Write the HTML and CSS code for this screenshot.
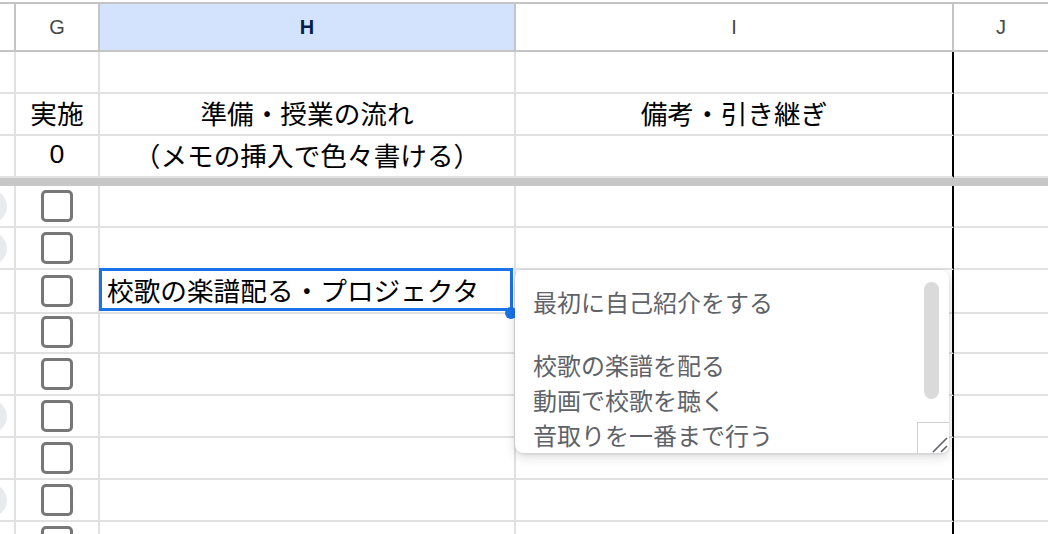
FILE: index.html
```html
<!DOCTYPE html>
<html lang="ja">
<head>
<meta charset="utf-8">
<title>授業計画シート</title>
<link rel="stylesheet" href="styles.css">
</head>
<body>
<div class="sheet">
  <div class="row head">
    <div class="cell stub"></div>
    <div class="cell">G</div>
    <div class="cell picked">H</div>
    <div class="cell">I</div>
    <div class="cell last">J</div>
  </div>

  <div class="row">
    <div class="cell stub"></div>
    <div class="cell"></div>
    <div class="cell"></div>
    <div class="cell edge"></div>
    <div class="cell last"></div>
  </div>
  <div class="row">
    <div class="cell stub"></div>
    <div class="cell center txt">実施</div>
    <div class="cell center txt">準備・授業の流れ</div>
    <div class="cell center txt edge">備考・引き継ぎ</div>
    <div class="cell last"></div>
  </div>
  <div class="row">
    <div class="cell stub"></div>
    <div class="cell center txt">0</div>
    <div class="cell center txt">（メモの挿入で色々書ける）</div>
    <div class="cell edge"></div>
    <div class="cell last"></div>
  </div>

  <div class="freeze"></div>

  <div class="row">
    <div class="cell stub"><span class="rownum"></span></div>
    <div class="cell center"><span class="check"></span></div>
    <div class="cell"></div>
    <div class="cell edge"></div>
    <div class="cell last"></div>
  </div>
  <div class="row">
    <div class="cell stub"><span class="rownum"></span></div>
    <div class="cell center"><span class="check"></span></div>
    <div class="cell"></div>
    <div class="cell edge"></div>
    <div class="cell last"></div>
  </div>
  <div class="row">
    <div class="cell stub"></div>
    <div class="cell center"><span class="check"></span></div>
    <div class="cell txt active">校歌の楽譜配る・プロジェクタ<span class="handle"></span></div>
    <div class="cell edge"></div>
    <div class="cell last"></div>
  </div>
  <div class="row">
    <div class="cell stub"></div>
    <div class="cell center"><span class="check"></span></div>
    <div class="cell"></div>
    <div class="cell edge"></div>
    <div class="cell last"></div>
  </div>
  <div class="row">
    <div class="cell stub"></div>
    <div class="cell center"><span class="check"></span></div>
    <div class="cell"></div>
    <div class="cell edge"></div>
    <div class="cell last"></div>
  </div>
  <div class="row">
    <div class="cell stub"><span class="rownum"></span></div>
    <div class="cell center"><span class="check"></span></div>
    <div class="cell"></div>
    <div class="cell edge"></div>
    <div class="cell last"></div>
  </div>
  <div class="row">
    <div class="cell stub"></div>
    <div class="cell center"><span class="check"></span></div>
    <div class="cell"></div>
    <div class="cell edge"></div>
    <div class="cell last"></div>
  </div>
  <div class="row">
    <div class="cell stub"><span class="rownum"></span></div>
    <div class="cell center"><span class="check"></span></div>
    <div class="cell"></div>
    <div class="cell edge"></div>
    <div class="cell last"></div>
  </div>
  <div class="row">
    <div class="cell stub"></div>
    <div class="cell center"><span class="check"></span></div>
    <div class="cell"></div>
    <div class="cell edge"></div>
    <div class="cell last"></div>
  </div>

  <div class="note">
    <div class="note-text">
      <p class="note-lead">最初に自己紹介をする</p>
      <p>校歌の楽譜を配る<br>動画で校歌を聴く<br>音取りを一番まで行う</p>
    </div>
    <div class="note-thumb"></div>
    <div class="note-grip">
      <svg width="31" height="30" viewBox="0 0 31 30">
        <path d="M15 29 L29 15 M23 29 L29 23" stroke="#5f6368" stroke-width="1.6" fill="none"/>
      </svg>
    </div>
  </div>
</div>
</body>
</html>
```

FILE: styles.css
```css
html, body {
  margin: 0;
  padding: 0;
  background: #fff;
  overflow: hidden;
}

.sheet {
  position: relative;
  width: 1048px;
  height: 534px;
  overflow: hidden;
  padding-top: 2px;
  box-sizing: border-box;
  font-family: "Liberation Sans", "Noto Sans CJK JP", sans-serif;
  font-size: 26.67px;
  color: #000;
}

.row {
  display: grid;
  grid-template-columns: 16px 84px 416px 438px 94px;
  height: 42px;
}

.cell {
  box-sizing: border-box;
  border-right: 2px solid #e1e1e1;
  border-bottom: 2px solid #e1e1e1;
  display: flex;
  align-items: center;
  overflow: hidden;
  white-space: nowrap;
}

.cell.center {
  justify-content: center;
}

/* CJK glyphs sit a little low in their line box */
.cell.txt {
  padding-bottom: 3px;
}

.cell.edge {
  border-right-color: #000;
}

.cell.last {
  border-right: none;
}

/* column header strip */
.row.head {
  height: 50px;
  border-top: 2px solid #c4c4c4;
  box-sizing: border-box;
}

.head .cell {
  border-color: #c4c4c4;
  justify-content: center;
  font-size: 20px;
  color: #444746;
}

.head .cell.picked {
  background: #d3e3fd;
  color: #041e49;
  font-weight: bold;
}

/* frozen rows divider */
.freeze {
  height: 8px;
  background: #c7c7c7;
}

/* row number stub, only its rounded edge shows */
.stub {
  position: relative;
}

.rownum {
  flex: none;
  width: 33px;
  height: 33px;
  margin-left: -26px;
  border-radius: 50%;
  background: #e8eaed;
}

.check {
  width: 32px;
  height: 32px;
  box-sizing: border-box;
  border: 3px solid #777;
  border-radius: 5px;
}

/* active cell */
.cell.active {
  position: relative;
  overflow: visible;
  padding-left: 7px;
}

.cell.active::after {
  content: "";
  position: absolute;
  top: -2px;
  left: -1px;
  right: 1px;
  bottom: 1px;
  border: 3px solid #1a73e8;
  pointer-events: none;
}

.handle {
  position: absolute;
  right: -3px;
  bottom: -7px;
  width: 12px;
  height: 12px;
  border-radius: 50%;
  background: #1a73e8;
  z-index: 2;
}

/* note popup */
.note {
  position: absolute;
  left: 515px;
  top: 270px;
  width: 434px;
  height: 183px;
  background: #fff;
  border-radius: 8px;
  box-shadow: 0 4px 12px rgba(0, 0, 0, 0.14), 0 1px 3px rgba(0, 0, 0, 0.12);
  overflow: hidden;
  z-index: 5;
}

.note-text {
  padding: 14px 0 0 18px;
  font-family: "Noto Sans CJK JP", sans-serif;
  font-size: 24px;
  line-height: 35px;
  color: #5f6368;
}

.note-text p {
  margin: 0;
}

.note-text .note-lead {
  margin-bottom: 28px;
}

.note-thumb {
  position: absolute;
  top: 12px;
  right: 10px;
  width: 15px;
  height: 117px;
  border-radius: 8px;
  background: #dadada;
}

.note-grip {
  position: absolute;
  right: 0;
  bottom: 0;
  width: 32px;
  height: 31px;
  box-sizing: border-box;
  border-left: 1px solid #d0d0d0;
  border-top: 1px solid #d0d0d0;
  background: #fff;
}

.note-grip svg {
  display: block;
}
```
